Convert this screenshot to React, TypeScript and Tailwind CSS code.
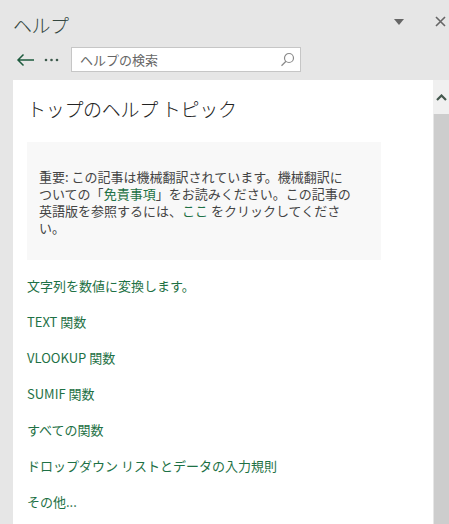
import React from 'react';

const links = [
  '文字列を数値に変換します。',
  'TEXT 関数',
  'VLOOKUP 関数',
  'SUMIF 関数',
  'すべての関数',
  'ドロップダウン リストとデータの入力規則',
  'その他...',
];

const App: React.FC = () => {
  return (
    <div
      className="w-[449px] h-[524px] overflow-hidden bg-[#e6e6e6] flex flex-col"
      style={{ fontFamily: '"Noto Sans CJK JP", "Noto Sans", sans-serif' }}
    >
      {/* header */}
      <div className="h-[47px] flex items-start pt-[12px] pl-[13px] pr-[3px]">
        <h1 className="text-[19px] leading-[26px] font-light text-[#34463f] tracking-[-0.5px]">ヘルプ</h1>
        <div className="ml-auto flex items-center gap-[31px] pt-[4px]">
          <svg width="10" height="6" viewBox="0 0 10 6">
            <path d="M0 0 H10 L5 6 Z" fill="#666" />
          </svg>
          <svg width="11" height="11" viewBox="0 0 11 11">
            <path d="M1 1 L10 10 M10 1 L1 10" stroke="#666" strokeWidth="1.6" />
          </svg>
        </div>
      </div>

      {/* search row */}
      <div className="h-[33px] flex items-start pl-[16px]">
        <div className="flex items-center h-[26px] gap-[9px]">
          <svg width="19" height="14" viewBox="0 0 19 14">
            <path d="M18 7 H2 M7.5 1.5 L2 7 L7.5 12.5" fill="none" stroke="#1e5b3e" strokeWidth="1.5" />
          </svg>
          <svg width="15" height="4" viewBox="0 0 15 4">
            <circle cx="2" cy="2" r="1.3" fill="#3d5a4c" />
            <circle cx="7.5" cy="2" r="1.3" fill="#3d5a4c" />
            <circle cx="13" cy="2" r="1.3" fill="#3d5a4c" />
          </svg>
        </div>
        <div className="ml-[12px] w-[230px] h-[25px] bg-white border border-[#c6c6c6] flex items-center pl-[8px] pr-[5px]">
          <span className="text-[13px] text-[#666] leading-none">ヘルプの検索</span>
          <svg className="ml-auto" width="15" height="15" viewBox="0 0 15 15">
            <circle cx="9" cy="6" r="4.5" fill="none" stroke="#8a8a8a" strokeWidth="1.2" />
            <path d="M6 9.2 L1.5 13.7" stroke="#8a8a8a" strokeWidth="1.3" />
          </svg>
        </div>
      </div>

      {/* content */}
      <div className="flex-1 flex pl-[13px]">
        <div className="flex-1 bg-white pl-[14px] pr-[52px] pt-[16px]">
          <h2 className="text-[19px] leading-[26px] font-light text-[#222] tracking-[-0.3px]">トップのヘルプ トピック</h2>

          <div className="mt-[20px] bg-[#f8f8f8] pl-[12px] pt-[26px] pb-[24px] text-[13px] leading-[17px] text-[#444]">
            重要: この記事は機械翻訳されています。機械翻訳に
            <br />
            ついての「<span className="text-[#1e7145]">免責事項</span>」をお読みください。この記事の
            <br />
            英語版を参照するには、<span className="text-[#1e7145]">ここ</span> をクリックしてくださ
            <br />
            い。
          </div>

          <ul className="mt-[16px] flex flex-col gap-[16px]">
            {links.map((l) => (
              <li key={l} className="text-[13px] leading-[20px] text-[#1e7145] whitespace-nowrap">
                {l}
              </li>
            ))}
          </ul>
        </div>

        {/* scrollbar */}
        <div className="w-[16px] flex flex-col">
          <div className="h-[34px] bg-[#f0f0f0] flex items-center justify-center">
            <svg width="11" height="7" viewBox="0 0 11 7">
              <path d="M1 6 L5.5 1.5 L10 6" fill="none" stroke="#44584e" strokeWidth="2.2" />
            </svg>
          </div>
          <div className="flex-1 bg-[#cdcdcd] ml-[1px]" />
        </div>
      </div>
    </div>
  );
};

export default App;
